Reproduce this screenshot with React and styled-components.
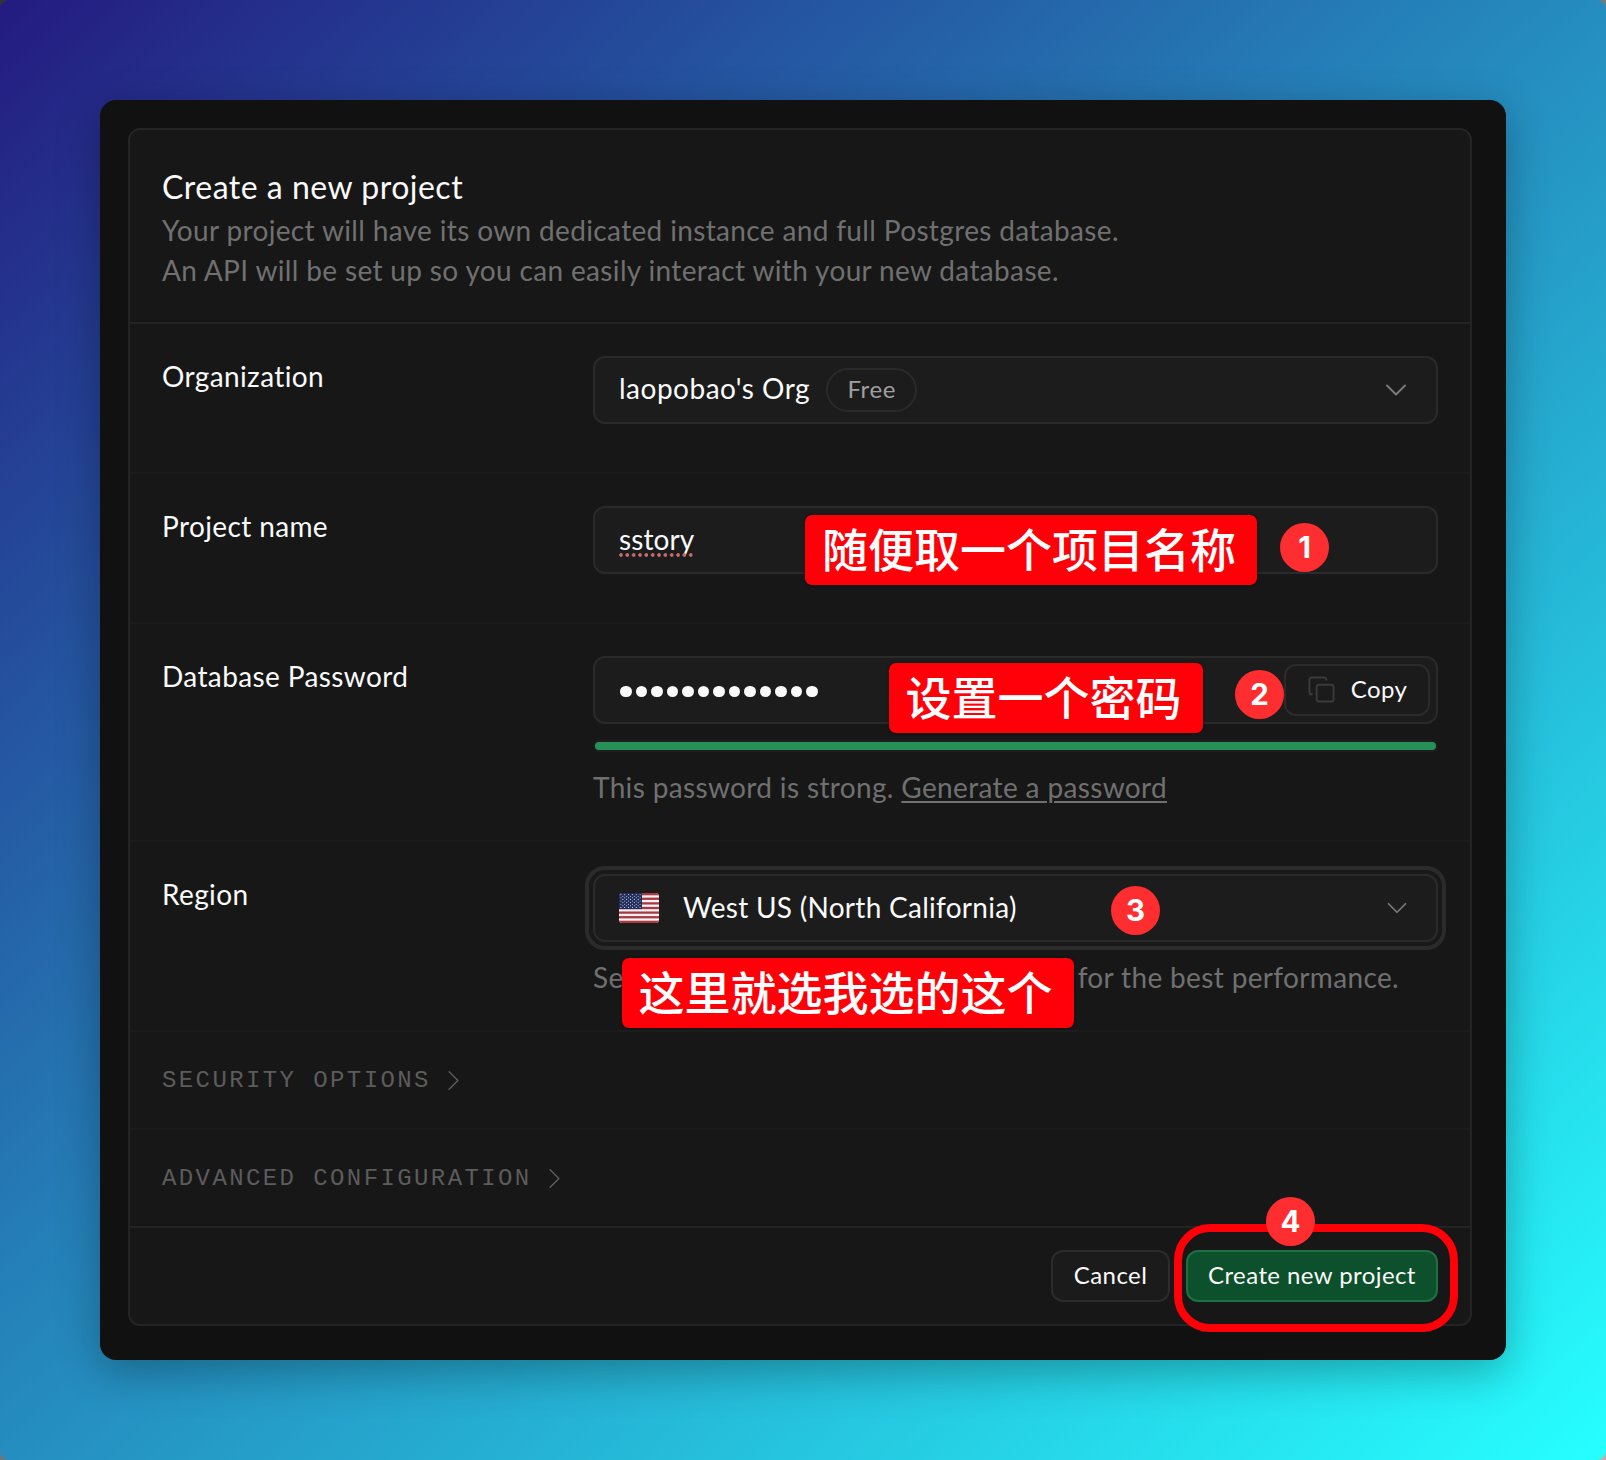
import React from 'react';
import styled, { createGlobalStyle, css } from 'styled-components';
import { ChevronDown, ChevronRight, Copy } from 'lucide-react';

const GlobalStyle = createGlobalStyle`
  * { box-sizing: border-box; }
  body {
    margin: 0;
    background: linear-gradient(135deg, #333333, #777777 50%, #c9aaa6);
  }
`;

const Backdrop = styled.div`
  position: relative;
  width: 1606px;
  height: 1460px;
  padding: 100px;
  border-radius: 9px;
  overflow: hidden;
  background: linear-gradient(to bottom right, #241b80, #26ffff);
  font-family: Lato, 'Liberation Sans', sans-serif;
  font-size: 28px;
  color: #fafafa;
`;

const Window = styled.main`
  width: 1406px;
  height: 1260px;
  padding: 28px;
  border-radius: 16px;
  background: #111111;
  box-shadow: 0 12px 44px rgba(0, 0, 0, 0.3);
`;

const Card = styled.section`
  width: 1344px;
  height: 1198px;
  border: 2px solid #242424;
  border-radius: 12px;
  background: #171717;
  display: flex;
  flex-direction: column;
`;

const Header = styled.header`
  height: 194px;
  padding: 36px 32px 0;
  border-bottom: 2px solid #242424;
`;

const Title = styled.h1`
  margin: 0 0 2px;
  font-size: 32px;
  font-weight: 400;
  line-height: 42px;
  letter-spacing: 0.5px;
`;

const Muted = styled.p`
  margin: 0;
  color: #707070;
  line-height: 40px;
  letter-spacing: 0.35px;
  white-space: nowrap;
`;

const Row = styled.div`
  display: grid;
  grid-template-columns: 431px 845px;
  height: ${(p) => p.$height}px;
  padding: 32px 32px 0;
  border-bottom: 2px solid #1c1c1c;
`;

const Label = styled.label`
  line-height: 40px;
  letter-spacing: 0.38px;
`;

const Control = styled.div`
  display: flex;
  flex-direction: column;
`;

const Field = styled.div`
  display: flex;
  align-items: center;
  height: 68px;
  padding: 0 22px 0 24px;
  border: 2px solid #2a2a2a;
  border-radius: 12px;
  background: #1c1c1c;
  ${(p) =>
    p.$focused &&
    css`
      outline: 4px solid #2b2b2b;
      outline-offset: 4px;
      box-shadow: 0 0 0 4px #191919;
    `}
`;

const Value = styled.span`
  padding-bottom: ${(p) => p.$lift || 0}px;
  letter-spacing: ${(p) => p.$track ?? 0.5}px;
  white-space: nowrap;
`;

const Plan = styled.span`
  display: flex;
  align-items: center;
  justify-content: center;
  width: 91px;
  height: 44px;
  margin-left: 16px;
  padding-bottom: 3px;
  border: 2px solid #2a2a2a;
  border-radius: 22px;
  color: #a0a0a0;
  font-size: 24px;
  letter-spacing: 0.6px;
`;

const Arrow = styled(ChevronDown)`
  margin-left: auto;
  color: #7a7a7a;
`;

const Misspelled = styled(Value)`
  position: relative;
  &::after {
    content: '';
    position: absolute;
    left: 0;
    bottom: 1px;
    width: 75px;
    height: 4px;
    background: radial-gradient(circle at 2px 2px, #c86d6d 1.5px, transparent 2.1px) 0 0 / 6.35px 4px repeat-x;
  }
`;

const Bullets = styled.span`
  display: flex;
  gap: 4px;
  padding: 3px 0 0 1px;
`;

const Bullet = styled.i`
  width: 11.5px;
  height: 11.5px;
  border-radius: 50%;
  background: #fafafa;
`;

const Button = styled.button`
  display: flex;
  align-items: center;
  justify-content: center;
  width: ${(p) => p.$width}px;
  height: 52px;
  padding: 0 0 4px;
  border: 2px solid ${(p) => (p.$primary ? '#1f6f43' : '#2b2b2b')};
  border-radius: 12px;
  background: ${(p) => (p.$primary ? '#0c502c' : '#1b1b1b')};
  color: #fafafa;
  font-family: inherit;
  font-size: 24px;
  letter-spacing: 0.42px;
`;

const CopyButton = styled(Button)`
  margin: 0 -16px 0 auto;
  gap: 15px;
  svg {
    margin-top: 3px;
    color: #3a3a3a;
  }
`;

const Meter = styled.div`
  height: 12px;
  margin: 16px 0 15px;
  padding: 2px;
  border-radius: 6px;
  background: #1c1f1e;
`;

const MeterFill = styled.div`
  height: 8px;
  border-radius: 4px;
  background: #279058;
`;

const GenerateLink = styled.a`
  text-decoration: underline;
  text-decoration-thickness: 2px;
  text-underline-offset: 3px;
`;

const Hint = styled(Muted)`
  display: flex;
  justify-content: space-between;
  width: 806px;
  margin-top: 15px;
`;

const FlagIcon = styled.svg`
  width: 40px;
  height: 30px;
  margin-right: 24px;
  flex: none;
`;

const Toggle = styled.div`
  display: flex;
  align-items: center;
  gap: 5px;
  height: 98px;
  padding: 0 32px;
  border-bottom: 2px solid ${(p) => (p.$last ? '#242424' : '#1c1c1c')};
  color: #5c5c5c;
  font-family: 'Liberation Mono', monospace;
  font-size: 24px;
  letter-spacing: 2.4px;
`;

const Footer = styled.footer`
  display: flex;
  gap: 16px;
  justify-content: flex-end;
  padding: 22px 32px 0;
`;

/* Callouts drawn over the form */
const Note = styled.div`
  position: absolute;
  left: ${(p) => p.$x}px;
  top: ${(p) => p.$y}px;
  height: 70px;
  padding: 0 21px 0 17px;
  border-radius: 7px;
  background: #ff0008;
  box-shadow: 0 0 3px rgba(0, 0, 0, 0.5);
  color: #fff;
  font-family: 'Noto Sans CJK SC', sans-serif;
  font-size: 46px;
  font-weight: 500;
  line-height: 65px;
  white-space: nowrap;
`;

const Step = styled.div`
  position: absolute;
  left: ${(p) => p.$x}px;
  top: ${(p) => p.$y}px;
  width: 49px;
  height: 49px;
  border-radius: 50%;
  background: #fd2d30;
  color: #fff;
  font: 700 29.5px/49px Inter, sans-serif;
  text-align: center;
`;

const Highlight = styled.div`
  position: absolute;
  left: 1174px;
  top: 1223.5px;
  width: 284px;
  height: 108px;
  border: 8px solid #ff0008;
  border-radius: 36px;
`;

const stripes = Array.from({ length: 13 }, (_, i) => i);
const stars = [];
for (let r = 0; r < 9; r++) {
  for (let c = r % 2; c < 11; c += 2) stars.push([1.9 + c * 1.92, 1.6 + r * 1.6]);
}

const Flag = () => (
  <FlagIcon viewBox="0 0 40 30">
    <clipPath id="flag-round">
      <rect width="40" height="30" rx="3.5" />
    </clipPath>
    <g clipPath="url(#flag-round)">
      <rect width="40" height="30" fill="#f7f3f4" />
      {stripes
        .filter((i) => i % 2 === 0)
        .map((i) => (
          <rect key={i} y={(i * 30) / 13} width="40" height={30 / 13} fill="#a83842" />
        ))}
      <rect width="23" height="16.15" fill="#212c5c" />
      {stars.map(([x, y], i) => (
        <circle key={i} cx={x} cy={y} r="0.55" fill="#d5d9ea" />
      ))}
    </g>
  </FlagIcon>
);

const bullets = Array.from({ length: 13 }, (_, i) => i);

export default function App() {
  return (
    <>
      <GlobalStyle />
      <Backdrop>
        <Window>
          <Card>
            <Header>
              <Title>Create a new project</Title>
              <Muted>Your project will have its own dedicated instance and full Postgres database.</Muted>
              <Muted>An API will be set up so you can easily interact with your new database.</Muted>
            </Header>
            <Row $height={150}>
              <Label>Organization</Label>
              <Control>
                <Field>
                  <Value $lift={4} $track={0.5}>laopobao's Org</Value>
                  <Plan>Free</Plan>
                  <Arrow size={36} strokeWidth={1.33} />
                </Field>
              </Control>
            </Row>
            <Row $height={150}>
              <Label>Project name</Label>
              <Control>
                <Field>
                  <Misspelled $lift={2} $track={0.1}>sstory</Misspelled>
                </Field>
              </Control>
            </Row>
            <Row $height={218}>
              <Label>Database Password</Label>
              <Control>
                <Field>
                  <Bullets>
                    {bullets.map((i) => (
                      <Bullet key={i} />
                    ))}
                  </Bullets>
                  <CopyButton $width={146}>
                    <Copy size={29} strokeWidth={1.6} />
                    Copy
                  </CopyButton>
                </Field>
                <Meter>
                  <MeterFill />
                </Meter>
                <Muted>
                  This password is strong. <GenerateLink>Generate a password</GenerateLink>
                </Muted>
              </Control>
            </Row>
            <Row $height={190}>
              <Label>Region</Label>
              <Control>
                <Field $focused>
                  <Flag />
                  <Value $lift={2} $track={0.28}>West US (North California)</Value>
                  <Arrow size={34} strokeWidth={1.2} />
                </Field>
                <Hint>
                  <span>Se</span>
                  <span>for the best performance.</span>
                </Hint>
              </Control>
            </Row>
            <Toggle>
              SECURITY OPTIONS
              <ChevronRight size={35} strokeWidth={1} />
            </Toggle>
            <Toggle $last>
              ADVANCED CONFIGURATION
              <ChevronRight size={35} strokeWidth={1} />
            </Toggle>
            <Footer>
              <Button $width={119}>Cancel</Button>
              <Button $primary $width={252}>Create new project</Button>
            </Footer>
          </Card>
        </Window>
        <Note $x={805} $y={515}>随便取一个项目名称</Note>
        <Note $x={888.5} $y={663}>设置一个密码</Note>
        <Note $x={621.5} $y={958}>这里就选我选的这个</Note>
        <Highlight />
        <Step $x={1280} $y={522.5}>1</Step>
        <Step $x={1235} $y={670}>2</Step>
        <Step $x={1111} $y={886}>3</Step>
        <Step $x={1266} $y={1196.5}>4</Step>
      </Backdrop>
    </>
  );
}
